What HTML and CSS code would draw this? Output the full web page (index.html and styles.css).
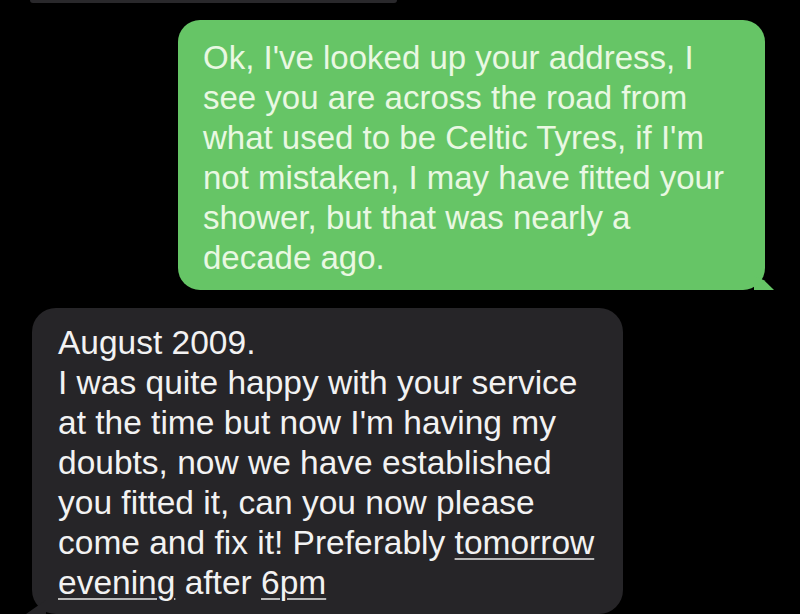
FILE: index.html
```html
<!DOCTYPE html>
<html>
<head>
<meta charset="utf-8">
<link rel="stylesheet" href="styles.css">
</head>
<body>
<div class="thread">
  <div class="prev"></div>
  <div class="bubble sent">Ok, I've looked up your address, I<br>see you are across the road from<br>what used to be Celtic Tyres, if I'm<br>not mistaken, I may have fitted your<br>shower, but that was nearly a<br>decade ago.</div>
  <div class="bubble recv">August 2009.<br>I was quite happy with your service<br>at the time but now I'm having my<br>doubts, now we have established<br>you fitted it, can you now please<br>come and fix it! Preferably <span class="link">tomorrow</span><br><span class="link">evening</span> after <span class="link">6pm</span></div>
</div>
</body>
</html>
```
FILE: styles.css
```css
html, body {
  margin: 0;
  padding: 0;
  background: #000;
  height: 614px;
  overflow: hidden;
}
.thread {
  display: flex;
  flex-direction: column;
  font-family: "Liberation Sans", Arial, sans-serif;
  line-height: 40px;
}
.prev {
  margin-left: 30px;
  width: 367px;
  height: 3px;
  background: #29282b;
  border-radius: 0 0 12px 12px;
}
.bubble {
  position: relative;
  white-space: nowrap;
  box-sizing: border-box;
}
.sent {
  margin-top: 17px;
  margin-left: 178px;
  width: 587px;
  height: 270px;
  padding: 18px 0 0 25px;
  font-size: 33px;
  background: #66c566;
  color: #e9f8e2;
  border-radius: 22px;
}
.sent::after {
  content: "";
  position: absolute;
  right: -9px;
  bottom: 0;
  width: 20px;
  height: 14px;
  background: #66c566;
  clip-path: polygon(0 0, 50% 30%, 100% 100%, 0 100%);
}
.recv {
  margin-top: 18px;
  margin-left: 32px;
  width: 591px;
  height: 306px;
  padding: 15px 0 0 26px;
  font-size: 33.5px;
  background: #262528;
  color: #f2f2f2;
  border-radius: 24px;
}
.recv::after {
  content: "";
  position: absolute;
  left: -6px;
  bottom: 0;
  width: 20px;
  height: 14px;
  background: #262528;
  clip-path: polygon(0 100%, 100% 0, 100% 100%);
}
.link {
  text-decoration: underline;
  text-decoration-color: #b8b8b8;
  text-decoration-thickness: 2px;
  text-underline-offset: 4px;
}
```
